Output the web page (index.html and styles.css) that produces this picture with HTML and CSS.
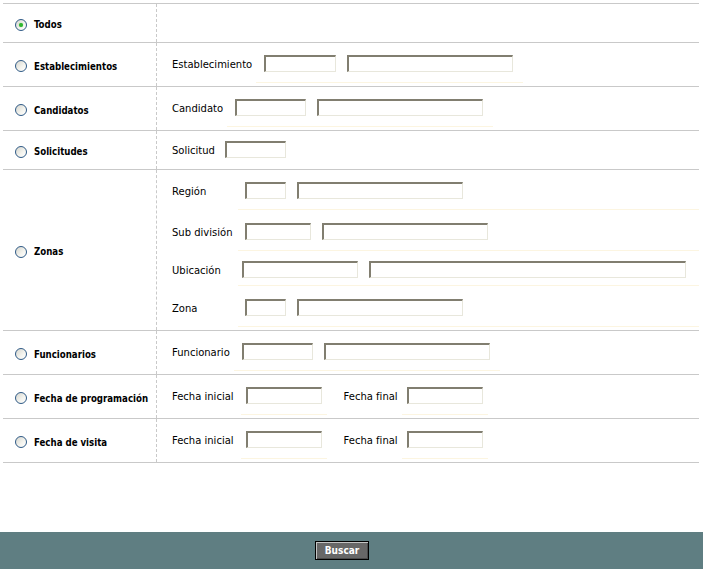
FILE: index.html
```html
<!DOCTYPE html>
<html lang="es">
<head>
<meta charset="utf-8">
<title>Búsqueda</title>
<link rel="stylesheet" href="styles.css">
</head>
<body>
<form class="page">
  <div class="grid">
    <div class="row row--short">
      <label class="opt"><input type="radio" name="f" class="radio" checked><span>Todos</span></label>
      <div class="fields"></div>
    </div>

    <div class="row">
      <label class="opt"><input type="radio" name="f" class="radio"><span>Establecimientos</span></label>
      <div class="fields">
        <div class="line">
          <span class="lbl">Establecimiento</span>
          <span class="ctl"><input class="in w72" type="text"><input class="in w166" type="text"></span>
        </div>
      </div>
    </div>

    <div class="row">
      <label class="opt"><input type="radio" name="f" class="radio"><span>Candidatos</span></label>
      <div class="fields">
        <div class="line">
          <span class="lbl">Candidato</span>
          <span class="ctl"><input class="in w71" type="text"><input class="in w166" type="text"></span>
        </div>
      </div>
    </div>

    <div class="row row--short">
      <label class="opt"><input type="radio" name="f" class="radio"><span>Solicitudes</span></label>
      <div class="fields">
        <div class="line line--short">
          <span class="lbl lbl--tight">Solicitud</span>
          <span class="ctl ctl--plain"><input class="in w61" type="text"></span>
        </div>
      </div>
    </div>

    <div class="row">
      <label class="opt"><input type="radio" name="f" class="radio"><span>Zonas</span></label>
      <div class="fields">
        <div class="line line--grid">
          <span class="lbl lbl--col">Región</span>
          <span class="ctl ctl--wide"><input class="in w41" type="text"><input class="in w166" type="text"></span>
        </div>
        <div class="line line--grid line--loose">
          <span class="lbl lbl--col">Sub división</span>
          <span class="ctl ctl--wide"><input class="in w66" type="text"><input class="in w166" type="text"></span>
        </div>
        <div class="line line--grid line--tight">
          <span class="lbl lbl--col">Ubicación</span>
          <span class="ctl ctl--wide ctl--shift"><input class="in w116" type="text"><input class="in w317" type="text"></span>
        </div>
        <div class="line line--grid line--loose">
          <span class="lbl lbl--col">Zona</span>
          <span class="ctl ctl--wide"><input class="in w41" type="text"><input class="in w166" type="text"></span>
        </div>
      </div>
    </div>

    <div class="row">
      <label class="opt"><input type="radio" name="f" class="radio"><span>Funcionarios</span></label>
      <div class="fields">
        <div class="line">
          <span class="lbl">Funcionario</span>
          <span class="ctl"><input class="in w71" type="text"><input class="in w166" type="text"></span>
        </div>
      </div>
    </div>

    <div class="row">
      <label class="opt"><input type="radio" name="f" class="radio"><span>Fecha de programación</span></label>
      <div class="fields">
        <div class="line line--dates">
          <span class="lbl lbl--first">Fecha inicial</span>
          <span class="ctl ctl--date"><input class="in w76" type="text"></span>
          <span class="lbl lbl--second">Fecha final</span>
          <span class="ctl ctl--date"><input class="in w76" type="text"></span>
        </div>
      </div>
    </div>

    <div class="row">
      <label class="opt"><input type="radio" name="f" class="radio"><span>Fecha de visita</span></label>
      <div class="fields">
        <div class="line line--dates">
          <span class="lbl lbl--first">Fecha inicial</span>
          <span class="ctl ctl--date"><input class="in w76" type="text"></span>
          <span class="lbl lbl--second">Fecha final</span>
          <span class="ctl ctl--date"><input class="in w76" type="text"></span>
        </div>
      </div>
    </div>
  </div>

  <div class="footer">
    <button type="button" class="btn">Buscar</button>
  </div>
</form>
</body>
</html>
```

FILE: styles.css
```css
html, body {
  margin: 0;
  padding: 0;
  background: #ffffff;
}

body {
  font-family: "DejaVu Sans", Verdana, sans-serif;
  font-size: 10px;
  color: #000000;
}

.page {
  margin: 0;
  padding-top: 3px;
}

.grid {
  margin-left: 3px;
  width: 696px;
  border-top: 1px solid #c9c9c9;
}

.row {
  display: flex;
  border-bottom: 1px solid #c9c9c9;
  min-height: 43px;
}

.row--short {
  min-height: 38px;
}

.opt {
  width: 153px;
  flex: 0 0 153px;
  display: flex;
  align-items: center;
  padding-left: 12px;
  padding-top: 3px;
  box-sizing: border-box;
  font-family: "DejaVu Sans Condensed", "DejaVu Sans", sans-serif;
  font-weight: bold;
  font-size: 9.6px;
  color: #000000;
  white-space: nowrap;
}

.radio {
  -webkit-appearance: none;
  appearance: none;
  margin: 0 7px 0 0;
  width: 12px;
  height: 12px;
  flex: 0 0 12px;
  border: 1px solid #2f5a86;
  border-radius: 50%;
  box-sizing: border-box;
  background: linear-gradient(135deg, #d6d6cf 0%, #f4f4ef 60%, #ffffff 100%);
  position: relative;
}

.radio:checked::after {
  content: "";
  position: absolute;
  left: 3px;
  top: 3px;
  width: 4px;
  height: 4px;
  border-radius: 50%;
  background: #30b530;
  box-shadow: 0 0 1px #5ed25e;
}

.fields {
  flex: 1 1 auto;
  border-left: 1px dashed #c9c9c9;
  padding-left: 15px;
  display: flex;
  flex-direction: column;
}

.line {
  display: flex;
  align-items: stretch;
  margin-bottom: 3px;
}

.lbl {
  display: flex;
  align-items: center;
  padding: 13px 4px 10px 0;
  white-space: nowrap;
}

.lbl--tight {
  padding-right: 2px;
}

.lbl--col {
  width: 66px;
  box-sizing: border-box;
  padding-right: 0;
}

.ctl {
  display: flex;
  align-items: center;
  gap: 11px;
  padding: 12px 10px 10px 8px;
  border-bottom: 1px solid #fcf5e1;
}

.ctl--plain {
  border-bottom-color: transparent;
  padding-top: 10px;
  padding-bottom: 7px;
}

.line--short .lbl {
  padding-top: 11px;
  padding-bottom: 7px;
}

.line--grid {
  margin-bottom: 0;
}

.line--grid:last-child {
  margin-bottom: 3px;
}

.ctl--wide {
  flex: 1 1 auto;
  padding-left: 7px;
}

.ctl--shift {
  padding-left: 4px;
}

.line--loose .lbl {
  padding-top: 14px;
}

.line--loose .ctl {
  padding-top: 13px;
}

.line--tight .lbl {
  padding-top: 11px;
  padding-bottom: 7px;
}

.line--tight .ctl {
  padding-top: 10px;
  padding-bottom: 7px;
}

.ctl--date {
  padding-left: 5px;
  padding-right: 5px;
}

.lbl--first {
  padding-right: 7px;
}

.lbl--second {
  padding-left: 17px;
  padding-right: 4px;
}

.in {
  height: 17px;
  box-sizing: border-box;
  margin: 0;
  padding: 0 2px;
  border-style: solid;
  border-width: 2px 1px 1px 2px;
  border-color: #817e70 #e8e7dc #e8e7dc #817e70;
  background: #ffffff;
  font-family: "DejaVu Sans", sans-serif;
  font-size: 10px;
  outline: none;
}

.w41 { width: 41px; }
.w61 { width: 61px; }
.w66 { width: 66px; }
.w71 { width: 71px; }
.w72 { width: 72px; }
.w76 { width: 76px; }
.w116 { width: 116px; }
.w166 { width: 166px; }
.w317 { width: 317px; }

.footer {
  margin-top: 69px;
  height: 37px;
  background: #5f7e82;
  display: flex;
  justify-content: center;
  align-items: flex-start;
  padding: 9px 19px 0 0;
  box-sizing: border-box;
}

.btn {
  width: 54px;
  height: 19px;
  margin: 0;
  padding: 0;
  background: #676767;
  border: 1px solid #000000;
  box-shadow: inset 1px 1px 0 #c4c4c4, inset -1px -1px 0 #4a4a4a;
  color: #ffffff;
  font-family: "DejaVu Sans Condensed", "DejaVu Sans", sans-serif;
  font-weight: bold;
  font-size: 10px;
  line-height: 15px;
  cursor: pointer;
}
```
